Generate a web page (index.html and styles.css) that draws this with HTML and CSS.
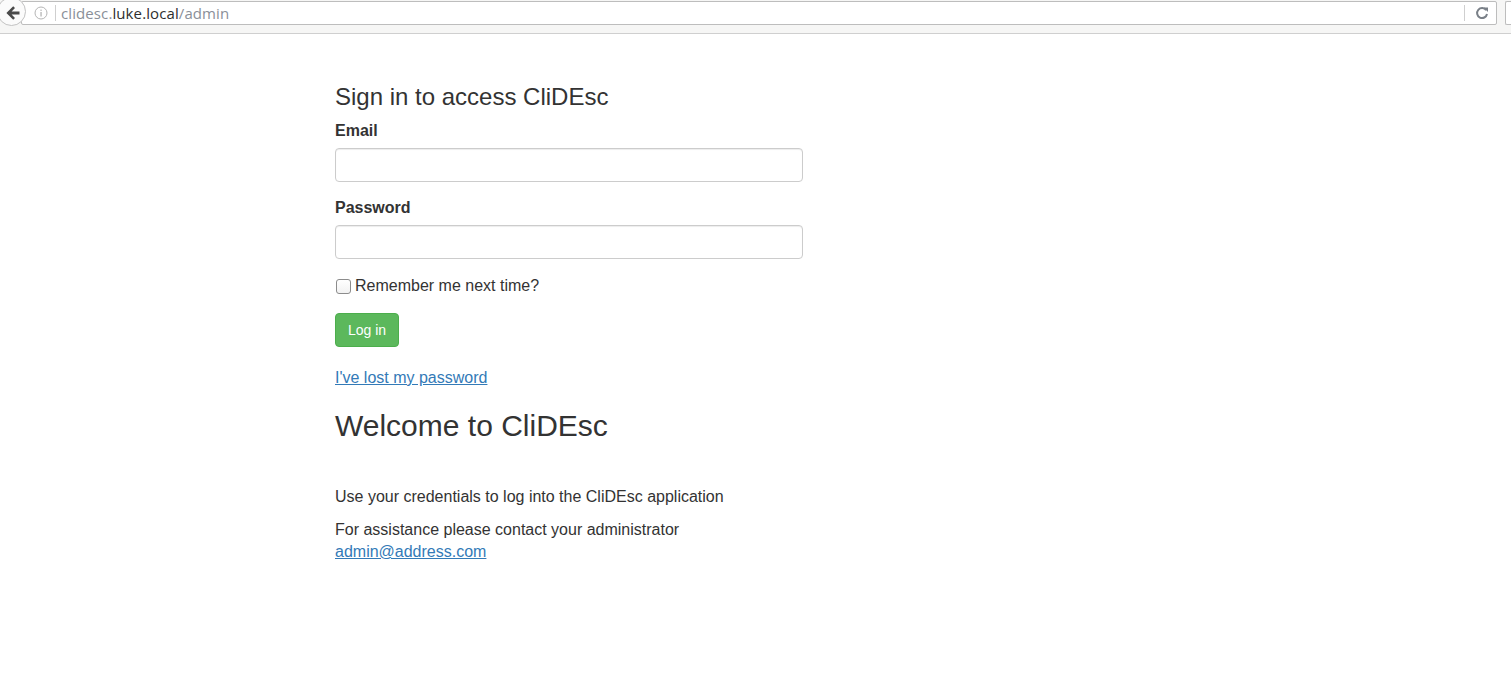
FILE: index.html
```html
<!DOCTYPE html>
<html>
<head>
<meta charset="utf-8">
<title>CliDEsc</title>
<link rel="stylesheet" href="styles.css">
</head>
<body>
<div class="chrome">
  <div class="back">
    <svg width="16" height="16" viewBox="0 0 16 16"><path d="M14.5 6.4H6.6l3.4-3.4L8.2 1.2 1.4 8l6.8 6.8L10 13 6.6 9.6h7.9z" fill="#4a4a4a"/></svg>
  </div>
  <div class="addr">
    <span class="info">
      <svg width="14" height="14" viewBox="0 0 14 14"><circle cx="7" cy="7" r="6" fill="none" stroke="#b5b5b5" stroke-width="1"/><rect x="6.4" y="6" width="1.3" height="4.5" fill="#b5b5b5"/><rect x="6.4" y="3.6" width="1.3" height="1.3" fill="#b5b5b5"/></svg>
    </span>
    <span class="sep"></span>
    <span class="url"><span class="dim">clidesc.</span>luke.local<span class="dim">/admin</span></span>
    <span class="sep sep-r"></span>
    <span class="reload">
      <svg width="14" height="14" viewBox="0 0 14 14"><path d="M11.2 4.2A5 5 0 1 0 12 8" fill="none" stroke="#7a8088" stroke-width="2"/><path d="M8.5 1.5h4.5V6z" fill="#7a8088"/></svg>
    </span>
  </div>
  <div class="edge"></div>
</div>

<main class="page">
  <h3 class="title">Sign in to access CliDEsc</h3>
  <form class="login">
    <div class="form-group">
      <label class="lbl">Email</label>
      <input class="form-control" type="text">
    </div>
    <div class="form-group">
      <label class="lbl">Password</label>
      <input class="form-control" type="password">
    </div>
    <div class="form-group check">
      <input class="cb" type="checkbox"><span>Remember me next time?</span>
    </div>
    <button class="btn" type="button">Log in</button>
  </form>
  <p class="lost"><a href="#">I've lost my password</a></p>
  <h2 class="welcome">Welcome to CliDEsc</h2>
  <p class="info-p">Use your credentials to log into the CliDEsc application</p>
  <p class="info-p">For assistance please contact your administrator<br><a href="#">admin@address.com</a></p>
</main>
</body>
</html>
```

FILE: styles.css
```css
html, body {
  margin: 0;
  padding: 0;
  background: #fff;
}
body {
  font-family: "Liberation Sans", Arial, sans-serif;
  font-size: 16px;
  color: #333;
}
.chrome {
  height: 33px;
  border-bottom: 1px solid #cfcfcf;
  background: #f6f6f5;
  display: flex;
  align-items: flex-start;
  overflow: hidden;
}
.back {
  position: relative;
  z-index: 2;
  flex: none;
  width: 29px;
  height: 29px;
  margin: -3px 0 0 -3px;
  border-radius: 50%;
  background: #fbfbfb;
  border: 1px solid #c2c2c2;
  display: flex;
  align-items: center;
  justify-content: center;
  box-sizing: border-box;
  padding-left: 2px;
  padding-top: 2px;
}
.addr {
  flex: 1;
  height: 24px;
  margin: 1px 0 0 -5px;
  background: #fff;
  border: 1px solid #bdbdbd;
  border-radius: 2px;
  box-sizing: border-box;
  display: flex;
  align-items: center;
  padding-left: 10px;
}
.info {
  display: flex;
  width: 14px;
  height: 14px;
  margin-left: 2px;
}
.sep {
  width: 1px;
  height: 16px;
  background: #cfcfcf;
  margin: 0 5px 0 7px;
}
.url {
  font-family: "Open Sans", "DejaVu Sans", sans-serif;
  font-size: 15px;
  color: #2e2e2e;
  flex: 1;
  letter-spacing: 0.1px;
}
.url .dim { color: #8a8f98; }
.sep-r { margin: 0 10px 0 0; }
.reload {
  display: flex;
  width: 14px;
  height: 14px;
  margin-right: 7px;
}
.edge {
  flex: none;
  width: 6px;
  height: 24px;
  margin: 1px 0 0 8px;
  border: 1px solid #bdbdbd;
  border-right: none;
  border-radius: 2px 0 0 2px;
  background: #fff;
  box-sizing: border-box;
}
.page {
  width: 468px;
  padding: 50px 0 0 335px;
}
.title {
  font-size: 24px;
  font-weight: 500;
  line-height: 26px;
  margin: 0 0 10px;
}
.form-group {
  margin-bottom: 15px;
}
.lbl {
  display: block;
  font-weight: bold;
  line-height: 22px;
  margin-bottom: 6px;
}
.form-control {
  display: block;
  width: 100%;
  height: 34px;
  box-sizing: border-box;
  border: 1px solid #ccc;
  border-radius: 4px;
  box-shadow: inset 0 1px 1px rgba(0,0,0,0.075);
  padding: 6px 12px;
  font: inherit;
  margin: 0;
}
.check {
  display: flex;
  align-items: center;
  line-height: 24px;
}
.cb {
  appearance: none;
  -webkit-appearance: none;
  width: 15px;
  height: 15px;
  margin: 1px 4px 0 1px;
  border: 1px solid #8c8c8c;
  border-radius: 3px;
  background: linear-gradient(#fff, #f2f2f2);
  box-sizing: border-box;
}
.btn {
  display: block;
  height: 34px;
  padding: 6px 12px;
  font-family: inherit;
  font-size: 14px;
  color: #fff;
  background: #5cb85c;
  border: 1px solid #4cae4c;
  border-radius: 4px;
  line-height: 20px;
  margin: 0;
}
.lost {
  margin: 20px 0 0;
  line-height: 22px;
}
a {
  color: #337ab7;
  text-decoration: underline;
}
.welcome {
  font-size: 30px;
  font-weight: 500;
  line-height: 33px;
  margin: 20px 0 44px;
}
.info-p {
  line-height: 22px;
  margin: 0 0 11px;
}
```
